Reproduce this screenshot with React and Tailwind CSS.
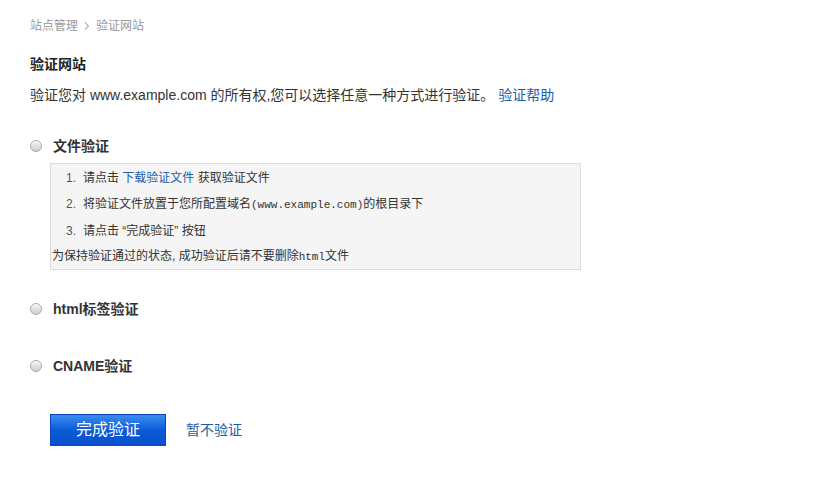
import React from "react";

const cjk = { fontFamily: '"Liberation Sans", "Noto Sans CJK SC", sans-serif' };
const mono = { fontFamily: '"Liberation Mono", "Noto Sans CJK SC", monospace' };

function Radio() {
  return (
    <span className="inline-block w-[12px] h-[12px] rounded-full border border-[#a8a8a8] bg-gradient-to-b from-[#f4f4f4] to-[#cfcfcf] shadow-[inset_0_1px_1px_rgba(255,255,255,0.9)]" />
  );
}

function Option({ label, className }) {
  return (
    <div className={"flex items-center gap-[11px] h-[20px] " + className}>
      <Radio />
      <span className="text-[14px] font-bold text-[#333] leading-[20px]">{label}</span>
    </div>
  );
}

export default function App() {
  return (
    <div className="min-h-screen bg-white px-[30px] pt-[18px] text-[#333]" style={cjk}>
      <div className="flex items-center gap-[5px] text-[12px] leading-[16px] text-[#999]">
        <span>站点管理</span>
        <svg width="8" height="10" viewBox="0 0 8 10">
          <path d="M2 1.5 L5.5 5 L2 8.5" fill="none" stroke="#b5b5b5" strokeWidth="1.2" />
        </svg>
        <span>验证网站</span>
      </div>

      <h1 className="mt-[20px] text-[14px] font-bold leading-[20px] text-[#222]">验证网站</h1>

      <p className="mt-[11px] text-[14px] leading-[20px] text-[#333]">
        验证您对 www.example.com 的所有权,您可以选择任意一种方式进行验证。{" "}
        <a className="text-[#1a5ea8]">验证帮助</a>
      </p>

      <Option label="文件验证" className="mt-[31px]" />

      <div className="mt-[7px] ml-[20px] w-[531px] border border-[#dcdcdc] bg-[#f5f5f5] pt-[1px] text-[12px] leading-[26px]">
        <ol className="pl-[15px]">
          <li className="flex">
            <span className="w-[17px] text-[#555]">1.</span>
            <span>
              请点击 <a className="text-[#1a5ea8]">下载验证文件</a> 获取验证文件
            </span>
          </li>
          <li className="flex">
            <span className="w-[17px] text-[#555]">2.</span>
            <span>
              将验证文件放置于您所配置域名
              <span className="text-[11px]" style={mono}>(www.example.com)</span>
              的根目录下
            </span>
          </li>
          <li className="flex">
            <span className="w-[17px] text-[#555]">3.</span>
            <span>请点击 “完成验证” 按钮</span>
          </li>
        </ol>
        <div className="pl-[1px] leading-[24px]">
          为保持验证通过的状态, 成功验证后请不要删除
          <span className="text-[11px]" style={mono}>html</span>
          文件
        </div>
      </div>

      <Option label="html标签验证" className="mt-[29px]" />
      <Option label="CNAME验证" className="mt-[37px]" />

      <div className="mt-[38px] ml-[20px] flex items-center gap-[20px]">
        <button className="w-[116px] h-[32px] border border-[#0a49b5] bg-gradient-to-b from-[#3b8cf0] via-[#0b5ad8] to-[#0a50cc] text-[16px] text-white leading-[30px]">
          完成验证
        </button>
        <a className="text-[14px] text-[#1a5ea8]">暂不验证</a>
      </div>
    </div>
  );
}
